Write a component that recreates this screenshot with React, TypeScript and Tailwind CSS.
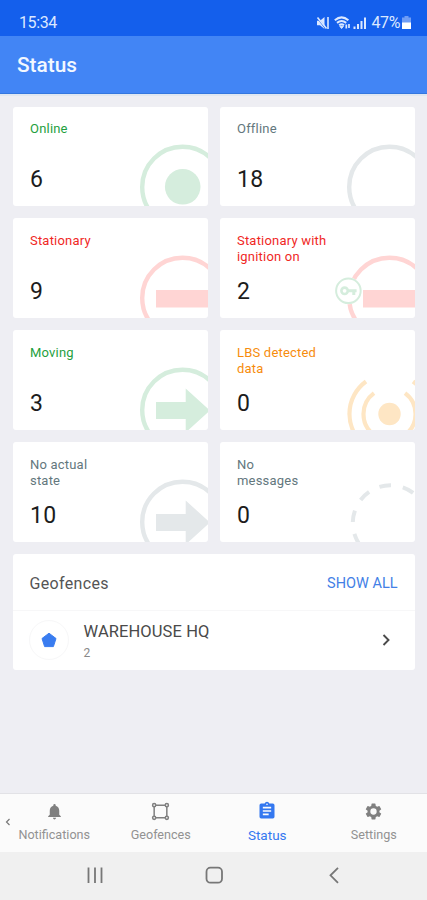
import type { ReactNode } from 'react';

const LABEL_COLORS: Record<string, string> = {
  green: 'text-[#1f9f40]',
  red: 'text-[#f0281f]',
  orange: 'text-[#f78c0d]',
  gray: 'text-[#63777d]',
};

const ICON_COLORS: Record<string, string> = {
  green: 'text-[#d5eddd]',
  red: 'text-[#ffd5d4]',
  orange: 'text-[#fee6c4]',
  gray: 'text-[#e4e8ea]',
};

const Ring = () => <circle cx="169.5" cy="80" r="40.3" fill="none" stroke="currentColor" strokeWidth="4.4" />;
const Bar = () => <path d="M143 72h60v17.4h-60z" fill="currentColor" />;
const Arrow = () => <path d="M143 72h29.7V58.5L197 80.5l-24.3 22V89H143z" fill="currentColor" />;

interface Status {
  id: string;
  label: string;
  value: number;
  color: string;
  icon: ReactNode;
}

const STATUSES: Status[] = [
  {
    id: 'online', label: 'Online', value: 6, color: 'green',
    icon: <><Ring /><circle cx="169.7" cy="79.8" r="17.8" fill="currentColor" /></>,
  },
  { id: 'offline', label: 'Offline', value: 18, color: 'gray', icon: <Ring /> },
  { id: 'stationary', label: 'Stationary', value: 9, color: 'red', icon: <><Ring /><Bar /></> },
  {
    id: 'ignition', label: 'Stationary with ignition on', value: 2, color: 'red',
    icon: (
      <>
        <Ring />
        <Bar />
        <circle cx="128.4" cy="72.8" r="13.4" fill="white" />
        <g stroke="#d5eddd" fill="none">
          <circle cx="128.4" cy="72.8" r="12.3" strokeWidth="2" />
          <circle cx="124.6" cy="72.8" r="3.2" strokeWidth="2.6" />
          <path d="M128 72.8h8.6M133.8 73v4" strokeWidth="3" />
        </g>
      </>
    ),
  },
  { id: 'moving', label: 'Moving', value: 3, color: 'green', icon: <><Ring /><Arrow /></> },
  {
    id: 'lbs', label: 'LBS detected data', value: 0, color: 'orange',
    icon: (
      <>
        <circle cx="169.5" cy="84" r="11.2" fill="currentColor" />
        <g fill="none" stroke="currentColor" strokeWidth="4.2">
          <path d="M154 63.1a26 26 0 0 0 0 41.8M185 63.1a26 26 0 0 1 0 41.8" />
          <path d="M146 51.5a40.2 40.2 0 0 0 0 65M193 51.5a40.2 40.2 0 0 1 0 65" />
        </g>
      </>
    ),
  },
  { id: 'noState', label: 'No actual state', value: 10, color: 'gray', icon: <><Ring /><Arrow /></> },
  {
    id: 'noMessages', label: 'No messages', value: 0, color: 'gray',
    icon: (
      <circle
        cx="170.5" cy="81" r="37.7" fill="none" stroke="currentColor" strokeWidth="4"
        strokeDasharray="11.7 11.99" transform="rotate(-107 170.5 81)"
      />
    ),
  },
];

function StatusCard({ status }: { status: Status }) {
  return (
    <div className="relative h-[99.5px] overflow-hidden rounded-[3px] bg-white pl-[17.5px] pt-[14.5px]">
      <svg viewBox="0 0 195 99.5" className={`absolute inset-0 h-full w-full ${ICON_COLORS[status.color]}`}>
        {status.icon}
      </svg>
      <div className={`relative h-[42px] text-[13px] leading-4 tracking-[0.2px] ${LABEL_COLORS[status.color]} ${
        status.id === 'ignition' || status.id === 'lbs' ? 'w-[100px]' : 'w-[76px]'
      }`}>
        {status.label}
      </div>
      <div className="relative text-[23px] leading-[33px] tracking-[0.2px] text-[#1c1c1c]">{status.value}</div>
    </div>
  );
}

function StatusBar() {
  return (
    <div className="flex h-9 items-center justify-between bg-[#145fec] pl-[19px] pr-4 pt-[9px] text-[#dbe8ff]">
      <span className="text-base tracking-[-0.4px]">15:34</span>
      <div className="flex items-center">
        <svg width="14" height="14" viewBox="0 0 14 14" fill="currentColor">
          <path d="M1 4.7h3L8.500 1v12L4 9.3H1z" />
          <path d="M1 1l9 12" stroke="#145fec" strokeWidth="1.6" />
          <path d="M1.5 1.5l9 11M12 1v12" stroke="currentColor" strokeWidth="1.6" />
        </svg>
        <svg width="18" height="14" viewBox="0 0 18 14" className="ml-[4px]" fill="none" stroke="currentColor">
          <path d="M.8 4.3q6.8-5.8 13.6 0M3 6.9q4.6-3.7 9.2 0M5.2 9.2q2.4-2 4.8 0" strokeWidth="2" />
          <path d="M5.8 10.2h3.6L7.6 12.5z" fill="currentColor" />
          <path d="M12.3 12.5V8.5M15 8v4" strokeWidth="1.7" />
        </svg>
        <svg width="14" height="14" viewBox="0 0 14 14" className="ml-px mr-[4px]" fill="currentColor">
          <path d="M.5 10.5h2V13h-2zM4 8h2v5H4zM7.500 5h2v8h-2zM11 1.5h2V13h-2z" />
        </svg>
        <span className="text-base leading-5 tracking-[-0.4px]">47%</span>
        <svg width="9" height="14" viewBox="0 0 9 14" className="ml-[2px]">
          <path d="M2.5 0h4v1.5H9V7H0V1.5h2.500z" fill="#709df5" />
          <path d="M0 6.5h9V13H0z" fill="white" />
        </svg>
      </div>
    </div>
  );
}

const TABS = [
  {
    label: 'Notifications',
    icon: <path d="M12 22c1.1 0 2-.9 2-2h-4c0 1.1.9 2 2 2zm6-6v-5c0-3.07-1.63-5.64-4.5-6.32V4a1.5 1.5 0 0 0-3 0v.68C7.64 5.36 6 7.92 6 11v5l-2 2v1h16v-1z" fill="currentColor" />,
  },
  {
    label: 'Geofences',
    icon: (
      <g fill="none" stroke="currentColor" strokeWidth="1.9">
        <path d="M6 4h12M6 20h12M4 6v12M20 6v12" />
        <circle cx="4" cy="4" r="2" /><circle cx="20" cy="4" r="2" />
        <circle cx="4" cy="20" r="2" /><circle cx="20" cy="20" r="2" />
      </g>
    ),
  },
  {
    label: 'Status',
    icon: <path d="M19 3h-4.18a3 3 0 0 0-5.64 0H5a2 2 0 0 0-2 2v14a2 2 0 0 0 2 2h14a2 2 0 0 0 2-2V5a2 2 0 0 0-2-2zm-7 0a1 1 0 1 1 0 2 1 1 0 0 1 0-2zm2 14H7v-2h7zm3-4H7v-2h10zm0-4H7V7h10z" fill="currentColor" />,
  },
  {
    label: 'Settings',
    icon: <path d="M19.43 12.98c.04-.32.07-.64.07-.98s-.03-.66-.07-.98l2.11-1.65a.5.5 0 0 0 .12-.64l-2-3.46a.5.5 0 0 0-.61-.22l-2.49 1a7.3 7.3 0 0 0-1.69-.98l-.38-2.65A.49.49 0 0 0 14 2h-4a.49.49 0 0 0-.49.42l-.38 2.65c-.61.25-1.17.59-1.69.98l-2.49-1a.49.49 0 0 0-.61.22l-2 3.46a.49.49 0 0 0 .12.64l2.11 1.65c-.04.32-.07.65-.07.98s.03.66.07.98l-2.11 1.65a.5.5 0 0 0-.12.64l2 3.46c.12.22.39.3.61.22l2.49-1c.52.4 1.08.73 1.69.98l.38 2.65c.03.24.24.42.49.42h4c.25 0 .46-.18.49-.42l.38-2.65a7.7 7.7 0 0 0 1.69-.98l2.49 1c.23.09.49 0 .61-.22l2-3.46a.5.5 0 0 0-.12-.64zM12 16a4 4 0 1 1 0-8 4 4 0 0 1 0 8z" fill="currentColor" fillRule="evenodd" />,
  },
];

function TabBar() {
  return (
    <div className="relative flex h-[59px] border-t border-[#e2e2e6] bg-[#fbfbfb] pl-px">
      <svg width="6" height="8" viewBox="0 0 6 8" className="absolute left-[5px] top-6" fill="none" stroke="#777" strokeWidth="1.2">
        <path d="M4.5 1L1.5 4l3 3" />
      </svg>
      {TABS.map(tab => {
        const active = tab.label === 'Status';

        return (
          <div
            key={tab.label}
            className={`flex flex-1 flex-col items-center ${active ? 'pt-[7px] text-[#3478f0]' : 'pt-2 text-[#808080]'}`}
          >
            <svg viewBox="0 0 24 24" className={active ? 'size-5' : 'size-[19px]'}>{tab.icon}</svg>
            <span className={active ? 'mt-1.5 text-[13.5px] leading-4' : 'mt-1.5 text-[12.6px] leading-4 text-[#929292]'}>
              {tab.label}
            </span>
          </div>
        );
      })}
    </div>
  );
}

export default function App() {
  return (
    <div className="flex h-[900px] w-[427px] flex-col bg-[#eeeef3] font-['Roboto',sans-serif]">
      <StatusBar />
      <div className="flex h-[58px] items-center border-b border-[#3477df] bg-[#4285f5] pl-[17px] pt-[3px] text-[20.8px] font-medium text-[#f2f8ff]">
        Status
      </div>

      <div className="flex flex-1 flex-col gap-3 border-t-2 border-[#e0e7f1] px-[12.5px] pt-[10.5px]">
        <div className="grid grid-cols-2 gap-x-3 gap-y-[12.4px]">
          {STATUSES.map(status => <StatusCard key={status.id} status={status} />)}
        </div>

        <div className="h-[116px] rounded-[3px] bg-white">
          <div className="flex h-[57px] items-center justify-between border-b border-[#f7f7f8] px-[17px] pt-1">
            <span className="text-base tracking-[0.35px] text-[#555]">Geofences</span>
            <span className="text-[14.5px] text-[#4380e6]">SHOW ALL</span>
          </div>
          <div className="flex h-[59px] items-center pl-4 pr-[23px]">
            <div className="flex size-10 items-center justify-center rounded-full border border-[#f7f7f8]">
              <svg width="16" height="16" viewBox="0 0 16 16">
                <path d="M8 1.2l7 5.3-2.6 8.1H3.6L1 6.5z" fill="#397cf0" stroke="#397cf0" strokeLinejoin="round" />
              </svg>
            </div>
            <div className="ml-[15px] flex-1 pt-[3px]">
              <div className="text-[16.5px] leading-5 tracking-[0.1px] text-[#4a4a4a]">WAREHOUSE HQ</div>
              <div className="mt-[3px] text-xs leading-4 text-[#888]">2</div>
            </div>
            <svg width="12" height="14" viewBox="0 0 12 14" fill="none" stroke="#4a4a4a" strokeWidth="1.9">
              <path d="M3.5 2l5 5-5 5" />
            </svg>
          </div>
        </div>
      </div>

      <TabBar />
      <div className="flex h-12 items-center bg-[#f0f0f0] text-[#777]">
        <svg viewBox="0 0 427 48" className="h-12 w-full" fill="none" stroke="currentColor" strokeWidth="1.8">
          <path d="M88.5 15.5v15.5M95 15.5v15.5M101.5 15.5v15.5" />
          <rect x="206.5" y="15.7" width="15.5" height="15" rx="4" />
          <path d="M338 15.8l-7.5 7.5 7.5 7.5" />
        </svg>
      </div>
    </div>
  );
}
